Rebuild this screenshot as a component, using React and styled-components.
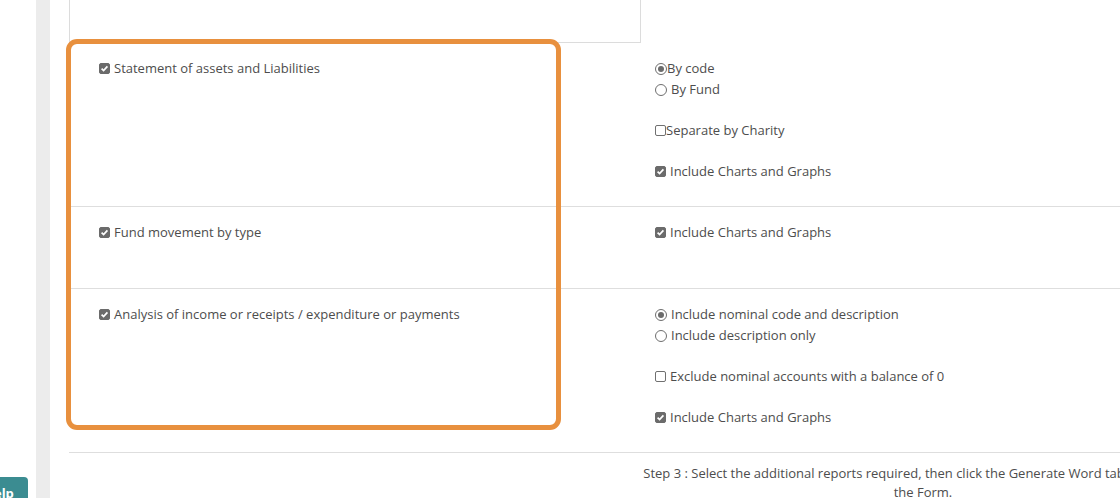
import React from 'react';
import styled, { createGlobalStyle } from 'styled-components';

const GlobalStyle = createGlobalStyle`
    html, body {
        margin: 0;
        padding: 0;
        background: #fff;
        overflow: hidden;
    }
    body {
        font-family: 'Open Sans', 'Liberation Sans', sans-serif;
        font-size: 13px;
        color: #4d4d4d;
    }
`

const Page = styled.div`
    display: flex;
    width: 1120px;
    height: 498px;
    overflow: hidden;
`

const Gutter = styled.div`
    width: 36px;
    flex-shrink: 0;
    display: flex;
    flex-direction: column;
    justify-content: flex-end;
`

const HelpButton = styled.button`
    margin: 0 0 -10px -30px;
    width: 58px;
    height: 31px;
    border: none;
    border-radius: 4px;
    background: #3b8c91;
    color: #fff;
    font-family: 'Open Sans', sans-serif;
    font-weight: 700;
    font-size: 13px;
    text-align: left;
    padding: 0 0 0 14px;
`

const Strip = styled.div`
    width: 14px;
    flex-shrink: 0;
    background: #ececec;
`

const Main = styled.div`
    flex: 1;
    padding-left: 19px;
    min-width: 0;
`

const NotesBox = styled.div`
    width: 570px;
    height: 42px;
    border: 1px solid #dcdcdc;
    border-top: none;
`

const Rows = styled.div`
    position: relative;
`

const Highlight = styled.div`
    position: absolute;
    left: -3px;
    top: -4px;
    width: 495px;
    height: 391px;
    box-sizing: border-box;
    border: 5px solid #e8903e;
    border-radius: 11px;
    pointer-events: none;
`

const Row = styled.div`
    display: flex;
    min-height: ${(props) => props.minHeight || 0}px;
    border-bottom: 1px solid #dedede;
    padding: 15px 0 24px;
    box-sizing: border-box;
`

const LeftCell = styled.div`
    width: 586px;
    flex-shrink: 0;
    padding-left: 30px;
    box-sizing: border-box;
`

const RightCell = styled.div`
    display: flex;
    flex-direction: column;
    gap: 20px;
`

const Group = styled.div`
    display: flex;
    flex-direction: column;
`

const Option = styled.label`
    display: flex;
    align-items: center;
    height: 21px;
    line-height: 21px;
    white-space: nowrap;
    gap: ${(props) => props.tight ? 0 : 4}px;
`

const Box = styled.span`
    width: 11px;
    height: 11px;
    box-sizing: border-box;
    border-radius: 2px;
    flex-shrink: 0;
    display: inline-flex;
    align-items: center;
    justify-content: center;
    background: ${(props) => props.checked ? '#6b6b6b' : '#fff'};
    border: 1px solid ${(props) => props.checked ? '#6b6b6b' : '#707070'};
`

const Circle = styled.span`
    width: 12px;
    height: 12px;
    box-sizing: border-box;
    border-radius: 50%;
    flex-shrink: 0;
    border: 1px solid #6e6e6e;
    display: inline-flex;
    align-items: center;
    justify-content: center;
    &::after {
        content: '';
        width: 6px;
        height: 6px;
        border-radius: 50%;
        background: ${(props) => props.checked ? '#6b6b6b' : 'transparent'};
    }
`

const Footer = styled.div`
    width: 572px;
    margin-left: 568px;
    padding-top: 11px;
    text-align: center;
    line-height: 19px;
`

function Check({checked}) {
    return (
        <Box checked={checked}>
            {checked && (
                <svg width="9" height="9" viewBox="0 0 9 9">
                    <path d="M1.6 4.6 L3.6 6.6 L7.4 2.4" fill="none" stroke="#fff" strokeWidth="1.7"/>
                </svg>
            )}
        </Box>
    )
}

function Radio({checked}) {
    return <Circle checked={checked}/>
}

export default function App() {
    return (
        <>
            <GlobalStyle/>
            <Page>
                <Gutter>
                    <HelpButton>Help</HelpButton>
                </Gutter>
                <Strip/>
                <Main>
                    <NotesBox/>
                    <Rows>
                        <Highlight/>
                        <Row>
                            <LeftCell>
                                <Option><Check checked/>Statement of assets and Liabilities</Option>
                            </LeftCell>
                            <RightCell>
                                <Group>
                                    <Option tight><Radio checked/>By code</Option>
                                    <Option><Radio/>By Fund</Option>
                                </Group>
                                <Option tight><Check/>Separate by Charity</Option>
                                <Option><Check checked/>Include Charts and Graphs</Option>
                            </RightCell>
                        </Row>
                        <Row minHeight={82}>
                            <LeftCell>
                                <Option><Check checked/>Fund movement by type</Option>
                            </LeftCell>
                            <RightCell>
                                <Option><Check checked/>Include Charts and Graphs</Option>
                            </RightCell>
                        </Row>
                        <Row>
                            <LeftCell>
                                <Option><Check checked/>Analysis of income or receipts / expenditure or payments</Option>
                            </LeftCell>
                            <RightCell>
                                <Group>
                                    <Option><Radio checked/>Include nominal code and description</Option>
                                    <Option><Radio/>Include description only</Option>
                                </Group>
                                <Option><Check/>Exclude nominal accounts with a balance of 0</Option>
                                <Option><Check checked/>Include Charts and Graphs</Option>
                            </RightCell>
                        </Row>
                    </Rows>
                    <Footer>
                        Step 3 : Select the additional reports required, then click the Generate Word tab at the top of the Form.
                    </Footer>
                </Main>
            </Page>
        </>
    )
}
